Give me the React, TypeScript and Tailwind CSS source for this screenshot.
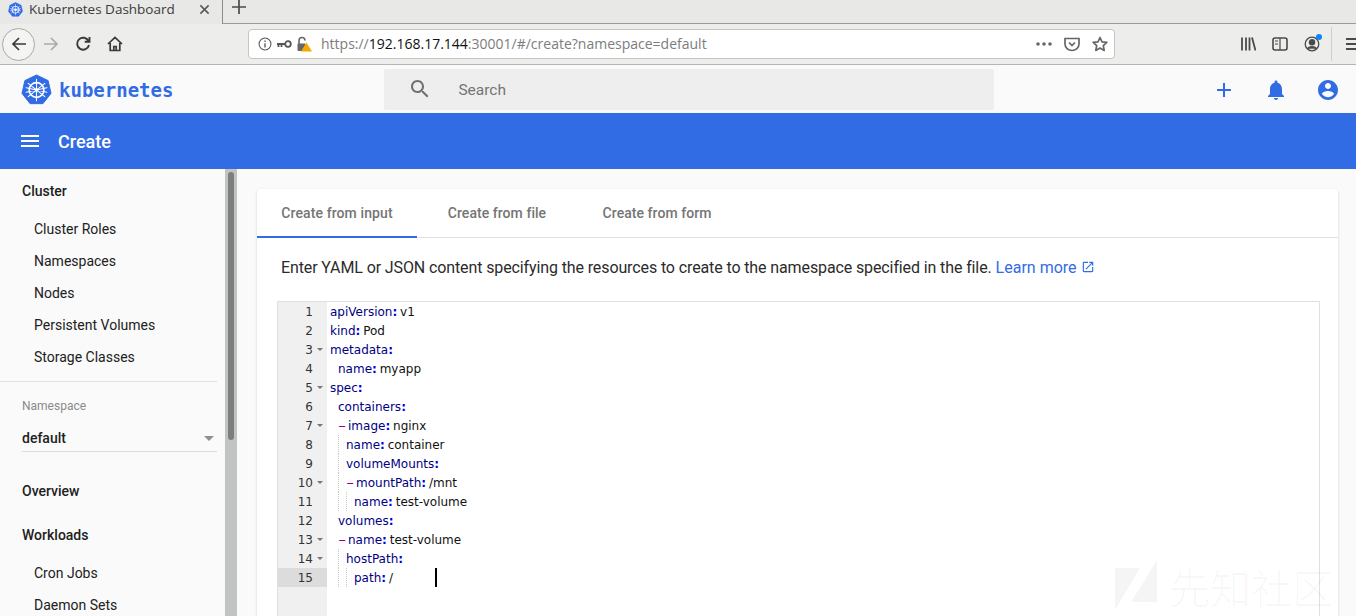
import React from 'react';

const clusterItems = ['Cluster Roles', 'Namespaces', 'Nodes', 'Persistent Volumes', 'Storage Classes'];

type Line = { guides?: number; pad?: number; dash?: boolean; key: string; value?: string; fold?: boolean };

const lines: Line[] = [
  { key: 'apiVersion', value: 'v1' },
  { key: 'kind', value: 'Pod' },
  { key: 'metadata', fold: true },
  { pad: 1, key: 'name', value: 'myapp' },
  { key: 'spec', fold: true },
  { pad: 1, key: 'containers' },
  { pad: 1, dash: true, key: 'image', value: 'nginx', fold: true },
  { pad: 1, guides: 1, key: 'name', value: 'container' },
  { pad: 1, guides: 1, key: 'volumeMounts' },
  { pad: 1, guides: 1, dash: true, key: 'mountPath', value: '/mnt', fold: true },
  { pad: 1, guides: 2, key: 'name', value: 'test-volume' },
  { pad: 1, key: 'volumes' },
  { pad: 1, dash: true, key: 'name', value: 'test-volume', fold: true },
  { pad: 1, guides: 1, key: 'hostPath', fold: true },
  { pad: 1, guides: 2, key: 'path', value: '/' },
];

const MaterialIcon = ({ d, className }: { d: string; className: string }) => (
  <svg viewBox="0 0 24 24" className={className} fill="currentColor">
    <path d={d} />
  </svg>
);

const KubeLogo = ({ size }: { size: number }) => (
  <svg width={size} height={size} viewBox="0 0 32 32">
    <path d="M16 1 L28 6.8 L31 20 L22.6 30.6 L9.4 30.6 L1 20 L4 6.8 Z" fill="#326ce5" stroke="#326ce5" strokeWidth="1" strokeLinejoin="round" />
    <g stroke="#fff" fill="none" strokeLinecap="round">
      <circle cx="16" cy="16.5" r="7.6" strokeWidth="1.7" />
      <circle cx="16" cy="16.5" r="1.6" fill="#fff" strokeWidth="0.6" />
      <path d="M16 5.5V27.5M7.4 9.6L24.6 23.4M24.6 9.6L7.4 23.4M5.3 18.9L26.7 14.1M26.7 18.9L5.3 14.1" strokeWidth="1.1" />
    </g>
  </svg>
);

const BrowserTabs = () => (
  <div className="flex h-6 bg-[#e8e8e6]">
    <div className="flex w-[223px] items-center border-r border-[#8c8c8c] bg-[#e8e8e6] pb-[6px] pl-[8px] pr-[12px]">
      <KubeLogo size={15} />
      <span className="ml-[6px] font-['Open_Sans',sans-serif] text-[13.5px] leading-[18px] text-[#3b3b3b]">Kubernetes Dashboard</span>
      <svg viewBox="0 0 12 12" className="ml-auto h-[11px] w-[11px]" stroke="#555" strokeWidth="1.6">
        <path d="M1.5 1.5L10.5 10.5M10.5 1.5L1.5 10.5" />
      </svg>
    </div>
    <div className="flex flex-1 border-b border-[#9c9c9a] pl-[9px]">
      <svg viewBox="0 0 14 14" className="h-[14px] w-[14px]" stroke="#4a4a4a" strokeWidth="1.7">
        <path d="M7 0V14M0 7H14" />
      </svg>
    </div>
  </div>
);

const BrowserToolbar = () => (
  <div className="flex h-[41px] items-center overflow-hidden border-b border-[#b5b5b3] bg-[#ededeb]">
    <div className="ml-[2px] flex h-[33px] w-[33px] shrink-0 items-center justify-center rounded-full border border-[#a8a8a8] bg-[#f4f4f3]">
      <svg viewBox="0 0 16 16" className="h-4 w-4" fill="none" stroke="#3a3a3a" strokeWidth="1.7">
        <path d="M15 8H2M8 2L2 8L8 14" />
      </svg>
    </div>
    <svg viewBox="0 0 16 16" className="ml-[8px] h-4 w-4 shrink-0" fill="none" stroke="#aaaaaa" strokeWidth="1.7">
      <path d="M1 8H14M8 2L14 8L8 14" />
    </svg>
    <svg viewBox="0 0 16 16" className="ml-[16px] h-4 w-4 shrink-0" fill="none" stroke="#3a3a3a" strokeWidth="1.9">
      <path d="M13.5 5A6 6 0 1 0 14 9M14.5 1V5.8H9.7" />
    </svg>
    <svg viewBox="0 0 16 16" className="ml-[16px] h-4 w-4 shrink-0" fill="none" stroke="#3a3a3a" strokeWidth="1.7">
      <path d="M1 8L8 1.5L15 8M3.2 7V14.5H12.8V7M6.8 14.5V10.5H9.2V14.5" />
    </svg>
    <div className="ml-[125px] flex h-[30px] w-[867px] shrink-0 items-center rounded-[4px] border border-[#c4c4c2] bg-white pl-[9px] text-[14px]">
      <svg viewBox="0 0 16 16" className="h-[14px] w-[14px]" fill="none" stroke="#555" strokeWidth="1.2">
        <circle cx="8" cy="8" r="6.8" />
        <path d="M8 7V12M8 4V5.6" strokeWidth="1.5" />
      </svg>
      <svg viewBox="0 0 16 10" className="ml-[4px] h-[10px] w-4" fill="none" stroke="#555" strokeWidth="1.8">
        <circle cx="12" cy="5" r="2.8" />
        <path d="M9 5H1M2.5 5V8M5.5 5V8" />
      </svg>
      <svg viewBox="0 0 16 16" className="ml-[4px] h-4 w-4">
        <path d="M3 8V4.5A3 3 0 0 1 9 4.5" fill="none" stroke="#666" strokeWidth="1.6" />
        <rect x="1.5" y="7.5" width="8" height="7.5" rx="1" fill="#666" />
        <path d="M10.5 6.5L16 15.5H5Z" fill="#f5a800" />
      </svg>
      <span className="ml-[9px] whitespace-pre font-['Open_Sans',sans-serif] leading-5 text-[#7d7d7d]">
        https://<span className="text-[#111]">192.168.17.144</span>:30001/#/create?namespace=default
      </span>
      <div className="ml-auto flex items-center pr-[6px]">
        <svg viewBox="0 0 16 4" className="h-1 w-4" fill="#666">
          <circle cx="2" cy="2" r="1.8" /><circle cx="8" cy="2" r="1.8" /><circle cx="14" cy="2" r="1.8" />
        </svg>
        <svg viewBox="0 0 16 16" className="ml-[12px] h-4 w-4" fill="none" stroke="#666" strokeWidth="1.7">
          <path d="M1 2.5H15V8A7 6.5 0 0 1 1 8ZM5 6.5L8 9.5L11 6.5" />
        </svg>
        <svg viewBox="0 0 16 16" className="ml-[12px] h-4 w-4" fill="none" stroke="#666" strokeWidth="1.7" strokeLinejoin="round">
          <path d="M8 1.5L10 5.8L14.8 6.4L11.3 9.6L12.2 14.4L8 12L3.8 14.4L4.7 9.6L1.2 6.4L6 5.8Z" />
        </svg>
      </div>
    </div>
    <svg viewBox="0 0 16 16" className="ml-[125px] h-4 w-4 shrink-0" fill="none" stroke="#4a4a4a" strokeWidth="1.8">
      <path d="M2 1.5V14.5M6 1.5V14.5M9.5 1.5V14.5M12 1.5L15.5 14.5" />
    </svg>
    <svg viewBox="0 0 16 16" className="ml-[16px] h-4 w-4 shrink-0" fill="none" stroke="#4a4a4a" strokeWidth="1.6">
      <rect x="1" y="2" width="14" height="12" rx="2" />
      <path d="M8 2V14M3 5H6M3 8H6" strokeWidth="1.2" />
    </svg>
    <div className="relative ml-[16px] h-4 w-4 shrink-0">
      <svg viewBox="0 0 16 16" className="h-4 w-4" fill="none" stroke="#4a4a4a" strokeWidth="1.3">
        <circle cx="8" cy="8" r="6.8" />
        <circle cx="8" cy="6.3" r="2.6" fill="#4a4a4a" />
        <path d="M3.6 12.8C4.5 10 11.5 10 12.4 12.8" fill="#4a4a4a" />
      </svg>
      <span className="absolute right-[-2px] top-[-2px] h-[6px] w-[6px] rounded-full bg-[#0a84ff]" />
    </div>
    <div className="ml-[11px] h-[34px] w-px shrink-0 bg-[#cfcfcd]" />
    <svg viewBox="0 0 16 16" className="ml-[13px] h-4 w-4 shrink-0" stroke="#4a4a4a" strokeWidth="1.9">
      <path d="M1 3H16M1 8H16M1 13H16" />
    </svg>
  </div>
);

const TopBar = () => (
  <div className="flex h-12 items-center bg-[#fafafa] pl-[21px]">
    <KubeLogo size={31} />
    <span className="ml-[7px] pt-[1px] font-['DejaVu_Sans_Mono',monospace] text-[19px] font-bold leading-6 text-[#326ce5]">kubernetes</span>
    <div className="ml-[211px] flex h-[41px] w-[610px] items-center rounded-[2px] bg-[#eeeeee] pl-[24px]">
      <MaterialIcon className="h-6 w-6 text-[#707070]" d="M15.5 14h-.79l-.28-.27C15.41 12.59 16 11.11 16 9.5 16 5.91 13.09 3 9.5 3S3 5.91 3 9.5 5.91 16 9.5 16c1.61 0 3.09-.59 4.23-1.57l.27.28v.79l5 4.99L20.49 19l-4.99-5zm-6 0C7.01 14 5 11.99 5 9.5S7.01 5 9.5 5 14 7.01 14 9.5 11.99 14 9.5 14z" />
      <span className="ml-[26px] pt-[3px] text-[15.5px] text-[#757575]">Search</span>
    </div>
    <div className="ml-auto flex items-center gap-[28px] pr-[16px] pt-[1px] text-[#326ce5]">
      <MaterialIcon className="h-6 w-6" d="M19 13h-6v6h-2v-6H5v-2h6V5h2v6h6v2z" />
      <MaterialIcon className="h-6 w-6" d="M12 22c1.1 0 2-.9 2-2h-4c0 1.1.89 2 2 2zm6-6v-5c0-3.07-1.64-5.64-4.5-6.32V4c0-.83-.67-1.5-1.5-1.5s-1.5.67-1.5 1.5v.68C7.63 5.36 6 7.92 6 11v5l-2 2v1h16v-1l-2-2z" />
      <MaterialIcon className="h-6 w-6" d="M12 2C6.48 2 2 6.48 2 12s4.48 10 10 10 10-4.48 10-10S17.52 2 12 2zm0 3c1.66 0 3 1.34 3 3s-1.34 3-3 3-3-1.34-3-3 1.34-3 3-3zm0 14.2c-2.5 0-4.71-1.28-6-3.22.03-1.99 4-3.08 6-3.08 1.99 0 5.97 1.09 6 3.08-1.29 1.94-3.5 3.22-6 3.22z" />
    </div>
  </div>
);

const TitleBar = () => (
  <div className="flex h-[56px] items-center bg-[#326ce5] pl-[18px] shadow-[0_2px_3px_rgba(0,0,0,0.18)]">
    <MaterialIcon className="h-6 w-6 text-white" d="M3 18h18v-2H3v2zm0-5h18v-2H3v2zm0-7v2h18V6H3z" />
    <span className="ml-[16px] text-[18px] font-medium text-white">Create</span>
  </div>
);

const Sidebar = () => (
  <div className="flex w-[237px] shrink-0">
    <div className="w-[225px] bg-[#fafafa] text-[14px] text-[#212121]">
      <div className="flex h-[44px] items-center pl-[22px] font-medium">Cluster</div>
      <div className="flex flex-col pb-[8px]">
        {clusterItems.map((item) => (
          <div key={item} className="flex h-[32px] items-center pl-[34px]">{item}</div>
        ))}
      </div>
      <div className="mr-[8px] h-px bg-[#e0e0e0]" />
      <div className="mr-[8px] pl-[22px]">
        <div className="pt-[16px] text-[12px] leading-4 text-[#8a8a8a]">Namespace</div>
        <div className="flex h-[38px] items-center justify-between border-b border-[#dcdcdc] pr-[3px] pt-[12px] font-medium">
          <span>default</span>
          <span className="h-0 w-0 border-x-[5px] border-t-[5px] border-x-transparent border-t-[#8f8f8f]" />
        </div>
      </div>
      <div className="mt-[17px] flex h-[44px] items-center pl-[22px] font-medium">Overview</div>
      <div className="flex h-[44px] items-center pl-[22px] font-medium">Workloads</div>
      <div className="flex h-[32px] items-center pl-[34px]">Cron Jobs</div>
      <div className="flex h-[32px] items-center pl-[34px]">Daemon Sets</div>
    </div>
    <div className="w-[12px] bg-[#c2c3c3] px-[3px] pt-[3px]">
      <div className="h-[268px] rounded-full bg-[#7d7f7f]" />
    </div>
  </div>
);

const CodeLine = ({ line }: { line: Line }) => (
  <div className="flex h-[19px] items-center whitespace-pre">
    {line.pad ? <span className="inline-block h-[19px] w-[8px]" /> : null}
    {Array.from({ length: line.guides ?? 0 }).map((_, i) => (
      <span key={i} className="inline-block h-[19px] w-[8px] border-l border-dotted border-[#c8c8c8]" />
    ))}
    {line.dash ? <span className="inline-block w-[10px] origin-left scale-x-[1.9] text-[#a0006f]">-</span> : null}
    <span className="text-[#00007f]">{line.key}</span>
    <span className="mr-[-1px] font-bold text-[#0000e6]">:</span>
    {line.value ? <span className="text-[#111]"> {line.value}</span> : null}
  </div>
);

const Editor = () => (
  <div className="relative ml-[20px] mr-[18px] mt-[21px] flex h-[400px] border border-[#e0e0e0] font-['DejaVu_Sans',sans-serif] text-[12px]">
    <div className="w-[49px] shrink-0 bg-[#f0f0f0] text-[#333]">
      {lines.map((line, i) => (
        <div key={i} className={`flex h-[19px] items-center justify-end pr-[5px] ${i === 14 ? 'bg-[#dcdcdc]' : ''}`}>
          <span>{i + 1}</span>
          <span className="ml-[4px] flex w-[5px] justify-center">
            {line.fold ? <span className="h-0 w-0 border-x-[3px] border-t-[3px] border-x-transparent border-t-[#777]" /> : null}
          </span>
        </div>
      ))}
    </div>
    <div className="flex-1 pl-[3px]">
      {lines.map((line, i) => (
        <CodeLine key={i} line={line} />
      ))}
    </div>
    <div className="absolute left-[157px] top-[266px] h-[19px] w-[2px] bg-black" />
  </div>
);

const Content = () => (
  <div className="flex-1 overflow-hidden bg-[#fafafa] pl-[20px] pr-[18px] pt-[20px]">
    <div className="h-[500px] rounded-t-[4px] bg-white shadow-[0_1px_3px_rgba(0,0,0,0.16)]">
      <div className="flex h-[49px] border-b border-[#e0e0e0] text-[14px] font-medium text-[#757575]">
        <div className="flex h-[49px] w-[160px] items-center justify-center border-b-2 border-[#326ce5] pt-[2px] tracking-[0.1px]">Create from input</div>
        <div className="flex h-[48px] w-[160px] items-center justify-center tracking-[0.05px]">Create from file</div>
        <div className="flex h-[48px] w-[160px] items-center justify-center tracking-[0.05px]">Create from form</div>
      </div>
      <div className="flex items-center pl-[24px] pt-[18px] text-[16px] leading-6 text-[#2b2b2b]">
        <span className="tracking-[-0.115px]">Enter YAML or JSON content specifying the resources to create to the namespace specified in the file.</span>
        <span className="ml-[4px] text-[#326ce5]">Learn more</span>
        <MaterialIcon className="ml-[4px] mb-[3px] h-[14px] w-[14px] text-[#326ce5]" d="M19 19H5V5h7V3H5c-1.11 0-2 .9-2 2v14c0 1.1.89 2 2 2h14c1.1 0 2-.9 2-2v-7h-2v7zM14 3v2h3.59l-9.83 9.83 1.41 1.41L19 6.41V10h2V3h-7z" />
      </div>
      <Editor />
    </div>
  </div>
);

const Watermark = () => (
  <div className="pointer-events-none absolute bottom-[4px] left-[1114px] flex items-center">
    <svg width="44" height="52" viewBox="0 0 44 52" fill="#000" fillOpacity="0.04">
      <path d="M1 8H26L1 50ZM43 0V42H17Z" />
    </svg>
    <span className="ml-[11px] whitespace-nowrap font-['Noto_Sans_CJK_SC',sans-serif] text-[41px] font-light leading-[50px] text-black/[0.04]">先知社区</span>
  </div>
);

export default function App() {
  return (
    <div className="relative flex h-[616px] w-[1356px] flex-col overflow-hidden font-['Roboto',sans-serif]">
      <BrowserTabs />
      <BrowserToolbar />
      <TopBar />
      <TitleBar />
      <div className="flex min-h-0 flex-1">
        <Sidebar />
        <Content />
      </div>
      <Watermark />
    </div>
  );
}
